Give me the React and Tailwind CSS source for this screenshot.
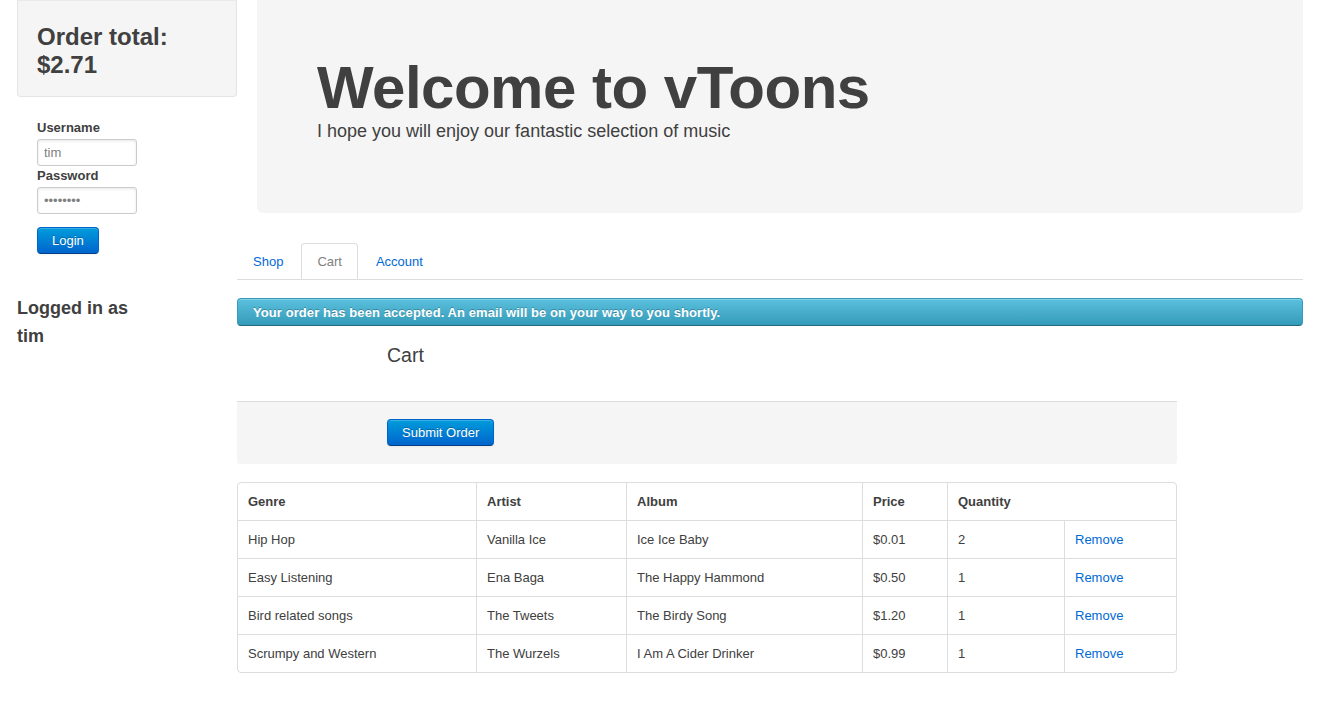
import React from "react";

const rows = [
  { genre: "Hip Hop", artist: "Vanilla Ice", album: "Ice Ice Baby", price: "$0.01", qty: "2" },
  { genre: "Easy Listening", artist: "Ena Baga", album: "The Happy Hammond", price: "$0.50", qty: "1" },
  { genre: "Bird related songs", artist: "The Tweets", album: "The Birdy Song", price: "$1.20", qty: "1" },
  { genre: "Scrumpy and Western", artist: "The Wurzels", album: "I Am A Cider Drinker", price: "$0.99", qty: "1" },
];

// primary button, bootstrap 1.x look
function PrimaryButton({ children }) {
  return (
    <button className="rounded-[4px] border border-[#0064cd] border-b-[#003f81] bg-linear-to-b from-[#049cdb] to-[#0064cd] px-[14px] py-[5px] text-[13px] leading-[15px] text-white [text-shadow:0_-1px_0_rgba(0,0,0,0.25)] shadow-[inset_0_1px_0_rgba(255,255,255,0.2),0_1px_2px_rgba(0,0,0,0.05)]">
      {children}
    </button>
  );
}

function Sidebar() {
  return (
    <div className="ml-[17px] w-[220px] shrink-0">
      <div className="h-[97px] rounded-b-[4px] border border-t-0 border-[#e5e5e5] bg-[#f5f5f5] px-[19px] pt-[23px] shadow-[inset_0_1px_1px_rgba(0,0,0,0.05)]">
        <h3 className="text-[24px] font-bold leading-[28px]">
          Order total:
          <br />
          $2.71
        </h3>
      </div>

      {/* Login */}
      <div className="mt-[22px] pl-[20px]">
        <label className="block text-[13px] font-bold leading-[18px]">Username</label>
        <input
          readOnly
          defaultValue="tim"
          className="mt-[2px] block h-[27px] w-[100px] rounded-[3px] border border-[#ccc] px-[6px] text-[13px] text-[#808080] shadow-[inset_0_1px_3px_rgba(0,0,0,0.1)] outline-none"
        />
        <label className="mt-[1px] block text-[13px] font-bold leading-[18px]">Password</label>
        <input
          readOnly
          type="password"
          defaultValue="password"
          className="mt-[2px] block h-[27px] w-[100px] rounded-[3px] border border-[#ccc] px-[6px] text-[13px] text-[#808080] shadow-[inset_0_1px_3px_rgba(0,0,0,0.1)] outline-none"
        />
        <div className="mt-[13px]">
          <PrimaryButton>Login</PrimaryButton>
        </div>
      </div>

      <h3 className="mt-[40px] text-[18px] font-bold leading-[28px]">
        Logged in as
        <br />
        tim
      </h3>
    </div>
  );
}

function Tabs() {
  return (
    <ul className="mt-[30px] flex border-b border-[#ddd]">
      <li>
        <a className="mr-[2px] block border border-transparent px-[15px] pt-[2px] leading-[32px] text-[#0069d6]">Shop</a>
      </li>
      <li className="-mb-px">
        <a className="mr-[2px] block rounded-t-[4px] border border-[#ddd] border-b-white bg-white px-[15px] pt-[2px] leading-[32px] text-[#808080]">
          Cart
        </a>
      </li>
      <li>
        <a className="mr-[2px] block border border-transparent px-[15px] pt-[2px] leading-[32px] text-[#0069d6]">Account</a>
      </li>
    </ul>
  );
}

function CartTable() {
  const td = "border-t border-l border-[#ddd] px-[10px] pt-[10px] pb-[9px] text-left leading-[18px]";
  const tdFirst = "border-t border-[#ddd] px-[10px] pt-[10px] pb-[9px] text-left leading-[18px]";
  return (
    <table className="mt-[18px] w-[940px] table-fixed border-separate border-spacing-0 rounded-[4px] border border-[#ddd] text-[13px]">
      <colgroup>
        <col className="w-[238px]" />
        <col className="w-[150px]" />
        <col className="w-[236px]" />
        <col className="w-[85px]" />
        <col className="w-[117px]" />
        <col className="w-[112px]" />
      </colgroup>
      <thead>
        <tr>
          <th className="px-[10px] pt-[10px] pb-[9px] text-left font-bold leading-[18px]">Genre</th>
          <th className="border-l border-[#ddd] px-[10px] pt-[10px] pb-[9px] text-left font-bold leading-[18px]">Artist</th>
          <th className="border-l border-[#ddd] px-[10px] pt-[10px] pb-[9px] text-left font-bold leading-[18px]">Album</th>
          <th className="border-l border-[#ddd] px-[10px] pt-[10px] pb-[9px] text-left font-bold leading-[18px]">Price</th>
          <th colSpan={2} className="border-l border-[#ddd] px-[10px] pt-[10px] pb-[9px] text-left font-bold leading-[18px]">
            Quantity
          </th>
        </tr>
      </thead>
      <tbody>
        {rows.map((r) => (
          <tr key={r.album}>
            <td className={tdFirst}>{r.genre}</td>
            <td className={td}>{r.artist}</td>
            <td className={td}>{r.album}</td>
            <td className={td}>{r.price}</td>
            <td className={td}>{r.qty}</td>
            <td className={td}>
              <a className="text-[#0069d6]">Remove</a>
            </td>
          </tr>
        ))}
      </tbody>
    </table>
  );
}

export default function App() {
  return (
    <div className="flex min-h-[713px] bg-white font-['Liberation_Sans',Arial,sans-serif] text-[13px] leading-[18px] text-[#404040]">
      <Sidebar />

      <div className="mr-[17px] min-w-0 flex-1">
        {/* Hero */}
        <div className="ml-[20px] h-[213px] rounded-b-[6px] bg-[#f5f5f5] px-[60px] pt-[58px]">
          <h1 className="text-[60px] font-bold leading-[60px] tracking-[-0.5px]">Welcome to vToons</h1>
          <p className="text-[18px] font-extralight leading-[27px]">
            I hope you will enjoy our fantastic selection of music
          </p>
        </div>

        <Tabs />

        <div className="mt-[18px] rounded-[4px] border border-[#339bb9] border-b-[#22697d] bg-linear-to-b from-[#5bc0de] to-[#339bb9] px-[15px] pt-[5px] pb-[3px] font-bold leading-[18px] tracking-[0.08px] text-white [text-shadow:0_-1px_0_rgba(0,0,0,0.25)] shadow-[inset_0_1px_0_rgba(255,255,255,0.25)]">
          Your order has been accepted. An email will be on your way to you shortly.
        </div>

        {/* Cart form */}
        <div className="w-[940px]">
          <div className="pt-[19px] pl-[150px] text-[19.5px] leading-[20px]">Cart</div>
          <div className="mt-[36px] rounded-b-[3px] border-t border-[#ddd] bg-[#f5f5f5] pt-[17px] pb-[18px] pl-[150px]">
            <PrimaryButton>Submit Order</PrimaryButton>
          </div>
        </div>

        <CartTable />
      </div>
    </div>
  );
}
